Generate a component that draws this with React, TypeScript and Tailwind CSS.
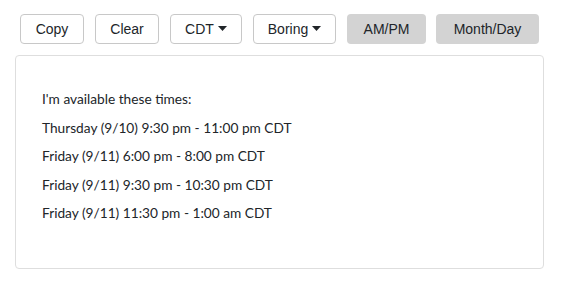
import React from "react";

const btn =
  "h-[30px] rounded-[4px] border border-[#c8c8c8] bg-white text-[14px] text-[#212529] flex items-center justify-center";
const btnGray =
  "h-[30px] rounded-[4px] bg-[#d3d3d3] text-[14px] text-[#212529] flex items-center justify-center";

function Caret() {
  return (
    <svg width="9" height="5" viewBox="0 0 9 5" className="ml-[4px] mt-[-2px]">
      <path d="M0 0 L9 0 L4.5 5 Z" fill="#212529" />
    </svg>
  );
}

export default function App() {
  const lines = [
    "I'm available these times:",
    "Thursday (9/10) 9:30 pm - 11:00 pm CDT",
    "Friday (9/11) 6:00 pm - 8:00 pm CDT",
    "Friday (9/11) 9:30 pm - 10:30 pm CDT",
    "Friday (9/11) 11:30 pm - 1:00 am CDT",
  ];
  return (
    <div
      className="w-[563px] h-[307px] bg-white pl-[15px] pt-[14px]"
      style={{ fontFamily: '"Liberation Sans", Arial, sans-serif' }}
    >
      <div className="flex gap-[11px] ml-[5px]">
        <button className={`${btn} w-[64px]`}>Copy</button>
        <button className={`${btn} w-[64px]`}>Clear</button>
        <button className={`${btn} w-[72px]`}>
          CDT
          <Caret />
        </button>
        <button className={`${btn} w-[83px]`}>
          Boring
          <Caret />
        </button>
        <button className={`${btnGray} w-[79px]`}>AM/PM</button>
        <button className={`${btnGray} w-[103px] ml-[-1px]`}>Month/Day</button>
      </div>
      <div
        className="mt-[11px] w-[529px] rounded-[4px] border border-[#dedede] pl-[26px] pt-[29px] pb-[40px] text-[13.7px] text-[#212529]"
        style={{ fontFamily: 'Lato, "Noto Sans", sans-serif' }}
      >
        {lines.map((l) => (
          <div key={l} className="leading-[28.6px]">
            {l}
          </div>
        ))}
      </div>
    </div>
  );
}
